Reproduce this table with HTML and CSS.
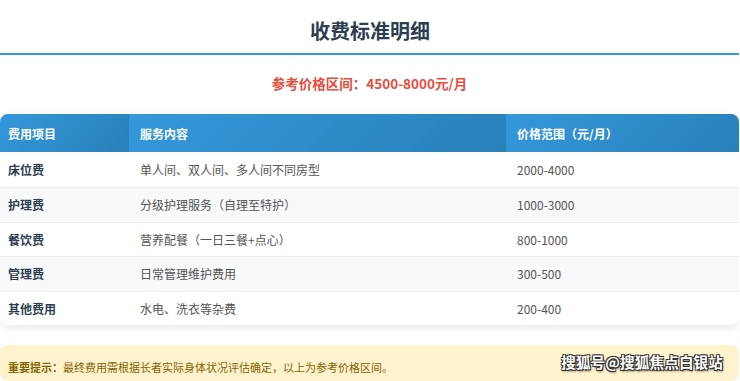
FILE: index.html
```html
<!DOCTYPE html>
<html lang="zh-CN">
<head>
<meta charset="utf-8">
<title>收费标准明细</title>
<link rel="stylesheet" href="styles.css">
</head>
<body>
<div class="page">
  <h1 class="title">收费标准明细</h1>
  <p class="range">参考价格区间：4500-8000元/月</p>
  <div class="card">
    <table class="fees">
      <thead>
        <tr><th class="c1">费用项目</th><th class="c2">服务内容</th><th class="c3">价格范围（元/月）</th></tr>
      </thead>
      <tbody>
        <tr><td class="item">床位费</td><td>单人间、双人间、多人间不同房型</td><td>2000-4000</td></tr>
        <tr><td class="item">护理费</td><td>分级护理服务（自理至特护）</td><td>1000-3000</td></tr>
        <tr><td class="item">餐饮费</td><td>营养配餐（一日三餐+点心）</td><td>800-1000</td></tr>
        <tr><td class="item">管理费</td><td>日常管理维护费用</td><td>300-500</td></tr>
        <tr><td class="item">其他费用</td><td>水电、洗衣等杂费</td><td>200-400</td></tr>
      </tbody>
    </table>
  </div>
  <div class="notice"><strong>重要提示：</strong>最终费用需根据长者实际身体状况评估确定，以上为参考价格区间。</div>
  <div class="watermark">搜狐号@搜狐焦点白银站</div>
</div>
</body>
</html>
```
FILE: styles.css
```css
html, body {
  margin: 0;
  padding: 0;
  background: #ffffff;
}
body {
  font-family: "Noto Sans CJK SC", "Noto Sans", sans-serif;
  color: #333;
}
.page {
  position: relative;
  width: 739px;
  height: 381px;
  overflow: hidden;
}
.title {
  margin: 0;
  padding: 17px 0 8px;
  font-size: 20px;
  line-height: 28px;
  font-weight: 700;
  color: #2c3e50;
  text-align: center;
  border-bottom: 2px solid #3498db;
  width: 740px;
}
.range {
  margin: 18px 0 21px;
  font-size: 13.5px;
  line-height: 20px;
  font-weight: 700;
  color: #e74c3c;
  text-align: center;
}
.card {
  border-radius: 8px;
  overflow: hidden;
  box-shadow: 0 3px 10px rgba(0, 0, 0, 0.09);
  background: #fff;
}
.fees {
  width: 100%;
  border-collapse: collapse;
  font-size: 12px;
}
.fees th {
  height: 38px;
  padding: 0 11px 0 8px;
  text-align: left;
  color: #fff;
  font-weight: 700;
  background: linear-gradient(135deg, #3498db, #2980b9);
}
.fees th.c1 { width: 110px; }
.fees th.c2 { width: 355px; padding-left: 11px; }
.fees th.c3 { padding-left: 11px; }
.fees td {
  height: 33.5px;
  padding: 0 11px;
  color: #555;
  border-top: 1px solid #eceef0;
}
.fees tbody tr:first-child td { border-top: none; height: 35px; }
.fees tbody tr:nth-child(even) td { background: #f8f9fa; }
.fees td.item {
  padding-left: 8px;
  font-weight: 700;
  color: #2c3e50;
}
.notice {
  margin-top: 20px;
  padding: 12px 8px 12px;
  height: 36px;
  box-sizing: border-box;
  background: #fff3cd;
  border-radius: 8px;
  font-size: 11px;
  line-height: 20px;
  color: #856404;
}
.notice strong {
  font-weight: 700;
}
.watermark {
  position: absolute;
  right: 16px;
  top: 352px;
  font-size: 14.5px;
  line-height: 20px;
  font-weight: 700;
  color: #fff;
  letter-spacing: 0.2px;
  text-shadow: -1px -1px 0 #333, 1px -1px 0 #333, -1px 1px 0 #333, 1px 1px 0 #333, 1px 2px 2px rgba(0,0,0,0.5);
}
```
